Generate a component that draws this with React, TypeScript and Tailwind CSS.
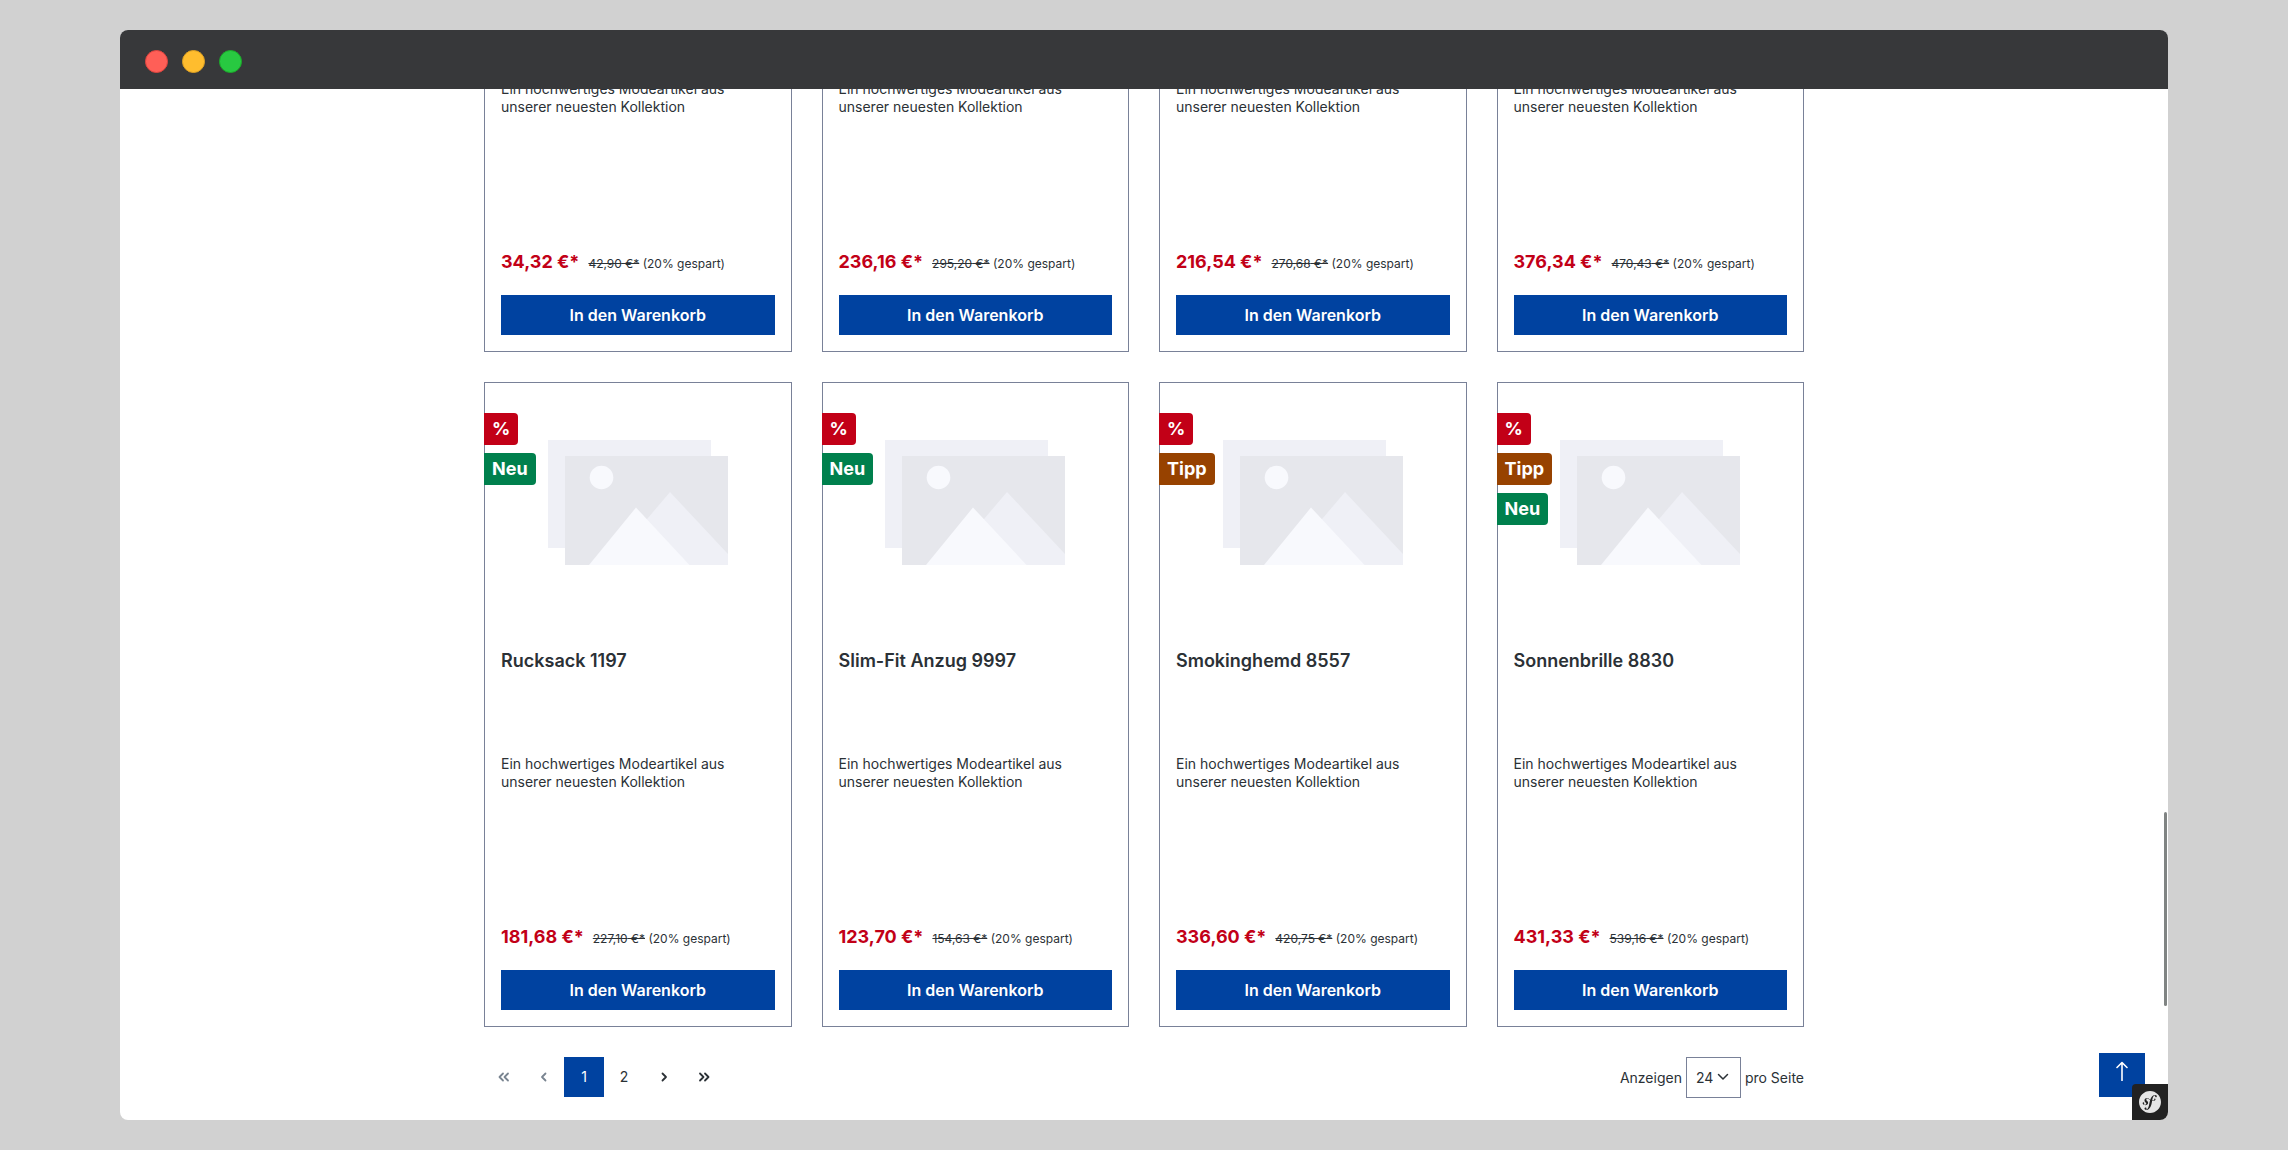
import React, { useState } from 'react'
import clsx from 'clsx'
import { SiSymfony } from 'react-icons/si'

type BadgeKind = 'sale' | 'tip' | 'new'

interface Product {
  name?: string
  price: string
  listPrice: string
  badges: BadgeKind[]
}

const products: Product[] = [
  { price: '34,32', listPrice: '42,90', badges: [] },
  { price: '236,16', listPrice: '295,20', badges: [] },
  { price: '216,54', listPrice: '270,68', badges: [] },
  { price: '376,34', listPrice: '470,43', badges: [] },
  { name: 'Rucksack 1197', price: '181,68', listPrice: '227,10', badges: ['sale', 'new'] },
  { name: 'Slim-Fit Anzug 9997', price: '123,70', listPrice: '154,63', badges: ['sale', 'new'] },
  { name: 'Smokinghemd 8557', price: '336,60', listPrice: '420,75', badges: ['sale', 'tip'] },
  { name: 'Sonnenbrille 8830', price: '431,33', listPrice: '539,16', badges: ['sale', 'tip', 'new'] }
]

const badgeLabels = { sale: '%', tip: 'Tipp', new: 'Neu' }

const badgeColors = {
  sale: 'bg-[#c20017]',
  tip: 'bg-[#974200]',
  new: 'bg-[#00804d]'
}

const Placeholder = () => (
  <svg viewBox="0 0 180 125" className="w-[180px]" aria-hidden="true">
    <path fill="#eff0f6" d="M0 0h163v108H0z" />
    <path fill="#e6e7ec" d="M17 16h163v109H17z" />
    <path fill="#eff0f6" d="M122 52l58 62v11H60z" />
    <path fill="#f8f9fd" d="M88 67.500l53.500 57.500H41z" />
    <circle fill="#f8f9fd" cx="53.500" cy="37.500" r="11.800" />
  </svg>
)

const ProductCard = ({ product }: { product: Product }) => (
  <article className="relative flex flex-col border border-[#798198] p-4">
    <div className="absolute top-[30px] -left-px flex flex-col items-start gap-2">
      {product.badges.map((badge) => (
        <span
          key={badge}
          className={clsx('h-8 rounded-r px-2 text-lg leading-8 font-bold text-white', badgeColors[badge])}
        >
          {badgeLabels[badge]}
        </span>
      ))}
    </div>
    <div className="flex h-[206px] items-center justify-center">
      <Placeholder />
    </div>
    <h3 className="mt-11 h-[66px] text-lg leading-6 font-semibold">{product.name}</h3>
    <p className="mt-10 h-[106px] text-sm leading-[18px]">
      Ein hochwertiges Modeartikel aus unserer neuesten Kollektion
    </p>
    <div className="mt-16 flex h-6 items-baseline gap-[9px] leading-6">
      <span className="text-lg leading-6 font-bold text-[#c20017]">{product.price} €*</span>
      <span className="text-xs">
        <s>{product.listPrice} €*</s> (20% gespart)
      </span>
    </div>
    <button type="button" className="mt-[21px] h-10 bg-[#0042a0] font-semibold text-white">
      In den Warenkorb
    </button>
  </article>
)

// single or double angle used by the pager
const Angle = ({ double, flip }: { double?: boolean; flip?: boolean }) => (
  <svg
    viewBox="0 0 16 16"
    className={clsx('size-4', flip && 'rotate-180')}
    fill="none"
    stroke="currentColor"
    strokeWidth="1.800"
    strokeLinecap="round"
    strokeLinejoin="round"
    aria-hidden="true"
  >
    {double ? <path d="M7 4.500L3.500 8L7 11.500M12 4.500L8.500 8L12 11.500" /> : <path d="M9.500 4.500L6 8l3.500 3.500" />}
  </svg>
)

const PagerButton = ({
  label,
  active,
  disabled,
  onClick,
  children
}: {
  label: string
  active?: boolean
  disabled?: boolean
  onClick: () => void
  children: React.ReactNode
}) => (
  <button
    type="button"
    aria-label={label}
    disabled={disabled}
    onClick={onClick}
    className={clsx(
      'flex size-10 items-center justify-center text-sm',
      active && 'bg-[#0042a0] text-white',
      disabled && 'text-[#798490]'
    )}
  >
    {children}
  </button>
)

const Pagination = () => {
  const [page, setPage] = useState(1)

  return (
    <nav aria-label="Seiten" className="flex">
      <PagerButton label="Erste Seite" disabled={page === 1} onClick={() => setPage(1)}>
        <Angle double />
      </PagerButton>
      <PagerButton label="Vorherige Seite" disabled={page === 1} onClick={() => setPage(1)}>
        <Angle />
      </PagerButton>
      <PagerButton label="Seite 1" active={page === 1} onClick={() => setPage(1)}>
        1
      </PagerButton>
      <PagerButton label="Seite 2" active={page === 2} onClick={() => setPage(2)}>
        2
      </PagerButton>
      <PagerButton label="Nächste Seite" disabled={page === 2} onClick={() => setPage(2)}>
        <Angle flip />
      </PagerButton>
      <PagerButton label="Letzte Seite" disabled={page === 2} onClick={() => setPage(2)}>
        <Angle double flip />
      </PagerButton>
    </nav>
  )
}

const PageSize = () => (
  <div className="flex items-center gap-1 text-sm">
    <label htmlFor="limit">Anzeigen</label>
    <div className="relative">
      <select
        id="limit"
        defaultValue="24"
        className="block h-[41px] w-[55px] appearance-none border border-[#798198] bg-white pl-[9px]"
      >
        <option>24</option>
      </select>
      <svg
        viewBox="0 0 12 8"
        className="pointer-events-none absolute top-4 right-3 w-3"
        fill="none"
        stroke="currentColor"
        strokeWidth="1.500"
        strokeLinecap="round"
        strokeLinejoin="round"
        aria-hidden="true"
      >
        <path d="M1.500 1.500L6 6l4.500-4.500" />
      </svg>
    </div>
    <span>pro Seite</span>
  </div>
)

const App = () => {
  return (
    <div className="h-screen bg-[#d1d1d1] px-[120px] py-[30px] font-['Inter',sans-serif] text-[#2b3136]">
      <div className="relative flex h-full flex-col overflow-hidden rounded-lg bg-white">
        <header className="z-10 flex h-[59px] shrink-0 items-center gap-3.5 bg-[#37383a] px-[25px] pt-[3px]">
          <span className="size-[23px] rounded-full border border-[#e0443e] bg-[#ff5f57]" />
          <span className="size-[23px] rounded-full border border-[#dea123] bg-[#ffbd2e]" />
          <span className="size-[23px] rounded-full border border-[#1aab29] bg-[#28c941]" />
        </header>

        {/* scrolled to the end of the listing */}
        <div className="flex min-h-0 grow flex-col justify-end overflow-hidden pb-[22px]">
          <main className="mx-auto w-full max-w-[1320px]">
            <div className="grid grid-cols-4 gap-[30px]">
              {products.map((product) => (
                <ProductCard key={product.price} product={product} />
              ))}
            </div>
            <div className="mt-[30px] flex items-start justify-between">
              <Pagination />
              <PageSize />
            </div>
          </main>
        </div>

        <div className="absolute right-px bottom-[114px] h-[194px] w-[3px] rounded-full bg-[#808483]" />

        <button
          type="button"
          aria-label="Nach oben"
          className="absolute right-[23px] bottom-[23px] flex h-11 w-[46px] justify-center bg-[#0042a0] pt-2 text-white"
        >
          <svg
            viewBox="0 0 14 20"
            className="h-5"
            fill="none"
            stroke="currentColor"
            strokeWidth="1.600"
            strokeLinecap="round"
            strokeLinejoin="round"
            aria-hidden="true"
          >
            <path d="M7 19.500V1.500M2 6.500l5-5 5 5" />
          </svg>
        </button>
        <button
          type="button"
          aria-label="Symfony"
          className="absolute right-0 bottom-0 flex size-9 items-center justify-center rounded-tl bg-[#222] text-[#e5e5e5]"
        >
          <SiSymfony className="size-[22px]" />
        </button>
      </div>
    </div>
  )
}

export default App
